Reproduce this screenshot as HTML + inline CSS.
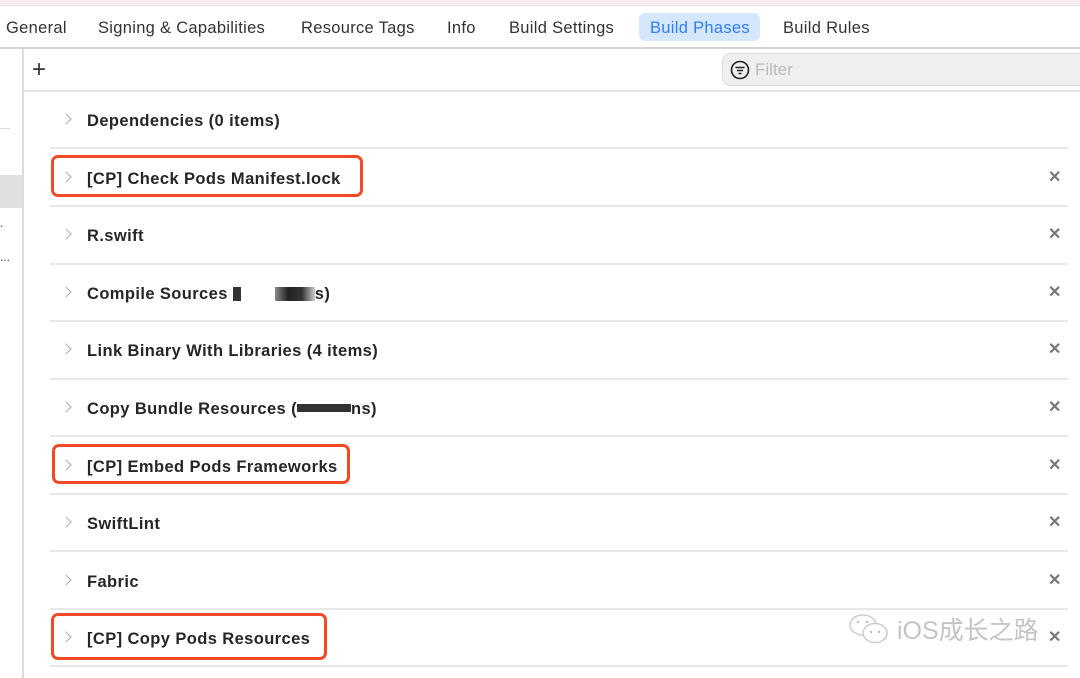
<!DOCTYPE html>
<html><head><meta charset="utf-8"><style>
*{margin:0;padding:0;box-sizing:border-box}
body{width:1080px;height:678px;overflow:hidden;background:#fff;font-family:"Liberation Sans","Noto Sans CJK SC",sans-serif;position:relative;color:#222}
.a{position:absolute}
.tab{position:absolute;top:18px;font-size:16.5px;letter-spacing:0.3px;color:#333;line-height:20px}
.row{position:absolute;left:87px;font-size:16.5px;letter-spacing:0.4px;font-weight:bold;color:#262626;line-height:20px}
.chev{position:absolute;left:62px;width:8px;height:8px;border-right:1.6px solid #aaa;border-top:1.6px solid #aaa;transform:rotate(45deg)}
.sep{position:absolute;left:50px;width:1018px;height:2px;background:#e8e8e8}
.x{position:absolute;left:1048px;font-size:16px;font-weight:bold;color:#777;line-height:20px}
.box{position:absolute;border:3px solid #f04a26;border-radius:7px}
</style></head><body>
<div class="a" style="left:0;top:0;width:1080px;height:5px;background:#f8eef0"></div>
<div class="a" style="left:0;top:5px;width:1080px;height:1px;background:#e6e6e6"></div>
<div class="a" style="left:639px;top:13px;width:121px;height:28px;background:#d5e7fd;border-radius:6px"></div>
<div class="tab" style="left:6px">General</div>
<div class="tab" style="left:98px">Signing &amp; Capabilities</div>
<div class="tab" style="left:301px">Resource Tags</div>
<div class="tab" style="left:447px">Info</div>
<div class="tab" style="left:509px">Build Settings</div>
<div class="tab" style="left:650px;color:#2f7cf6">Build Phases</div>
<div class="tab" style="left:783px">Build Rules</div>
<div class="a" style="left:0;top:47px;width:1080px;height:2px;background:#d4d4d4"></div>
<div class="a" style="left:22px;top:49px;width:2px;height:629px;background:#dcdcdc"></div>
<div class="a" style="left:0;top:128px;width:10px;height:1px;background:#ddd"></div>
<div class="a" style="left:0;top:175px;width:22px;height:33px;background:#e0e0e0"></div>
<div class="a" style="left:0;top:216px;font-size:12px;color:#444">.</div>
<div class="a" style="left:0;top:250px;font-size:12px;color:#444">...</div>
<div class="a" style="left:32px;top:57px;font-size:24px;line-height:26px;color:#333;font-weight:300">+</div>
<div class="a" style="left:722px;top:53px;width:370px;height:33px;background:#efefef;border:1px solid #ddd;border-radius:8px"></div>
<svg class="a" style="left:729px;top:59px" width="22" height="22" viewBox="0 0 22 22"><circle cx="11" cy="11" r="8.5" fill="none" stroke="#222" stroke-width="1.6"/><path d="M6.5 8.5h9M8 11.5h6M9.5 14.5h3" stroke="#222" stroke-width="1.5"/></svg>
<div class="a" style="left:755px;top:60px;font-size:17px;color:#bbb">Filter</div>
<div class="a" style="left:24px;top:90px;width:1056px;height:2px;background:#e4e4e4"></div>

<div class="chev" style="top:115px"></div><div class="row" style="top:111px">Dependencies (0 items)</div>
<div class="sep" style="top:147px"></div>
<div class="chev" style="top:173px"></div><div class="row" style="top:169px">[CP] Check Pods Manifest.lock</div><div class="x" style="top:168px">✕</div>
<div class="sep" style="top:205px"></div>
<div class="chev" style="top:230px"></div><div class="row" style="top:226px">R.swift</div><div class="x" style="top:225px">✕</div>
<div class="sep" style="top:263px"></div>
<div class="chev" style="top:288px"></div><div class="row" style="top:284px">Compile Sources <span style="display:inline-block;width:8px;height:14px;background:#333;vertical-align:-2px"></span><span style="display:inline-block;width:34px"></span><span style="display:inline-block;width:40px;height:14px;background:linear-gradient(90deg,#888,#222,#333,#ccc);vertical-align:-2px"></span>s)</div><div class="x" style="top:283px">✕</div>
<div class="sep" style="top:320px"></div>
<div class="chev" style="top:345px"></div><div class="row" style="top:341px">Link Binary With Libraries (4 items)</div><div class="x" style="top:340px">✕</div>
<div class="sep" style="top:378px"></div>
<div class="chev" style="top:403px"></div><div class="row" style="top:399px">Copy Bundle Resources (<span style="display:inline-block;width:54px;height:8px;background:#333;vertical-align:2px"></span>ns)</div><div class="x" style="top:398px">✕</div>
<div class="sep" style="top:435px"></div>
<div class="chev" style="top:461px"></div><div class="row" style="top:457px">[CP] Embed Pods Frameworks</div><div class="x" style="top:456px">✕</div>
<div class="sep" style="top:493px"></div>
<div class="chev" style="top:518px"></div><div class="row" style="top:514px">SwiftLint</div><div class="x" style="top:513px">✕</div>
<div class="sep" style="top:550px"></div>
<div class="chev" style="top:576px"></div><div class="row" style="top:572px">Fabric</div><div class="x" style="top:571px">✕</div>
<div class="sep" style="top:608px"></div>
<div class="chev" style="top:633px"></div><div class="row" style="top:629px">[CP] Copy Pods Resources</div><div class="x" style="top:628px">✕</div>
<div class="sep" style="top:665px"></div>

<div class="box" style="left:51px;top:155px;width:312px;height:42px"></div>
<div class="box" style="left:52px;top:444px;width:298px;height:40px"></div>
<div class="box" style="left:51px;top:613px;width:276px;height:47px"></div>

<svg class="a" style="left:848px;top:612px" width="44" height="36" viewBox="0 0 44 36"><ellipse cx="15" cy="13" rx="13" ry="10" fill="#fff" stroke="#ccc" stroke-width="1.5"/><ellipse cx="27" cy="21" rx="12" ry="9.5" fill="#fff" stroke="#ccc" stroke-width="1.5"/><circle cx="23" cy="20" r="1.2" fill="#bbb"/><circle cx="31" cy="20" r="1.2" fill="#bbb"/><circle cx="10" cy="10" r="1.2" fill="#bbb"/><circle cx="19" cy="10" r="1.2" fill="#bbb"/></svg>
<div class="a" style="left:897px;top:617px;font-size:25px;color:#c4c4c4;line-height:28px">iOS成长之路</div>
</body></html>
